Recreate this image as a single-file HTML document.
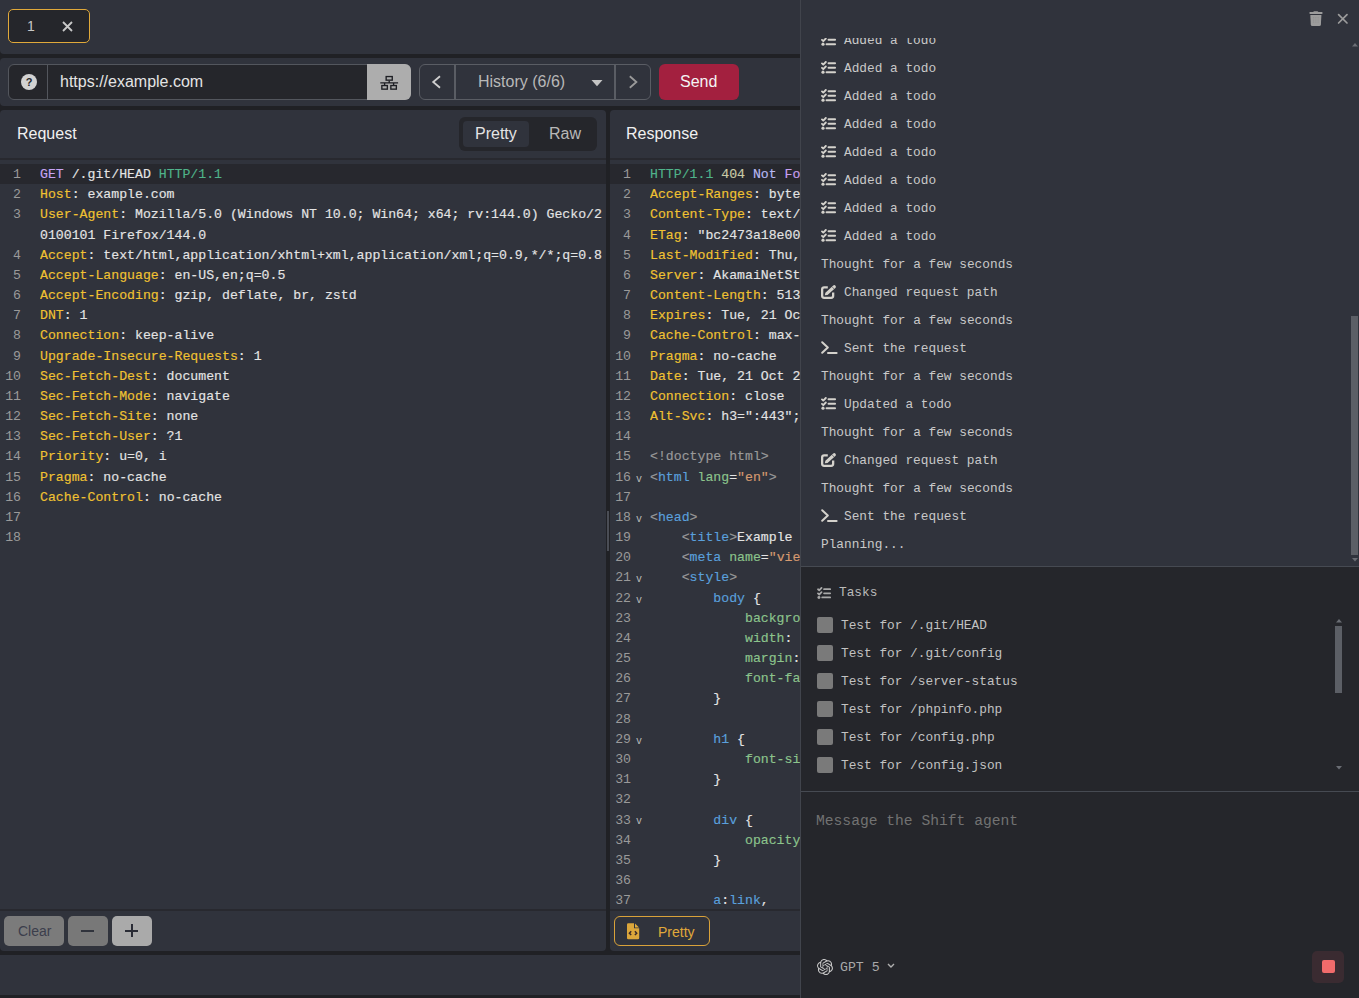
<!DOCTYPE html>
<html><head><meta charset="utf-8">
<style>
*{box-sizing:border-box;margin:0;padding:0}
html,body{width:1359px;height:998px;overflow:hidden;background:#202125;font-family:"Liberation Sans",sans-serif}
.a{position:absolute}
.panel{position:absolute;background:#30333c;border-radius:4px}
.mono{font-family:"Liberation Mono",monospace}
/* code */
.code{position:absolute;font-family:"Liberation Mono",monospace;font-size:13.2px;line-height:20.17px;white-space:pre;color:#e4e4e4;-webkit-text-stroke:0.15px currentColor}
.ln{position:absolute;width:21px;text-align:right;color:#9a9a9a;font-family:"Liberation Mono",monospace;font-size:13.2px;line-height:20.17px}
.hl{position:absolute;background:#27282e}
.m{color:#c8a4f4}.g{color:#4fb38a}.y{color:#f1c232}.w{color:#e4e4e4}
.t{color:#9a9a9a}.b{color:#5aa0dc}.gr{color:#8cc48c}.o{color:#d69a70}.lv{color:#b7b8f2}.pk{color:#c79ff0}.st{color:#cacaa6}
.fold{position:absolute;font-family:"Liberation Mono",monospace;font-size:10px;color:#bbb}
/* drawer */
.dr{position:absolute;font-family:"Liberation Mono",monospace;font-size:12.8px;color:#c9c9c9;white-space:pre}
</style></head><body>

<!-- top tab bar -->
<div class="panel" style="left:0;top:0;width:820px;height:54px;border-radius:0 0 4px 4px"></div>
<div class="a" style="left:8px;top:9px;width:82px;height:34px;border:1px solid #e0a93a;border-radius:5px;background:#25262b"></div>
<div class="a" style="left:27px;top:17px;font-size:14px;line-height:18px;color:#c8c8c8">1</div>
<svg class="a" style="left:62px;top:21px" width="11" height="11" viewBox="0 0 11 11"><path d="M1 1L10 10M10 1L1 10" stroke="#c8c8c8" stroke-width="1.8"/></svg>

<!-- url row -->
<div class="panel" style="left:0;top:58px;width:820px;height:48px"></div>

<!-- request panel -->
<div class="panel" style="left:0;top:110px;width:606px;height:841px"></div>
<!-- response panel -->
<div class="panel" style="left:610px;top:110px;width:220px;height:841px"></div>
<!-- bottom bar -->
<div class="a" style="left:0;top:955px;width:820px;height:40px;background:#30333c"></div>


<!-- URL row content -->
<div class="a" style="left:8px;top:64px;width:403px;height:36px;border:1px solid #53565d;border-radius:6px;background:#25262b;overflow:hidden">
  <div class="a" style="left:38px;top:0;width:1px;height:34px;background:#53565d"></div>
  </div>
<div class="a" style="left:367px;top:64px;width:44px;height:36px;background:#adadad;border-radius:0 6px 6px 0"></div>
<div class="a" style="left:21px;top:74px;width:16px;height:16px;border-radius:50%;background:#d2d2d2;color:#25262b;font-size:11px;font-weight:bold;line-height:16px;text-align:center">?</div>
<div class="a" style="left:60px;top:73px;font-size:16px;line-height:18px;color:#e4e4e4">https://example.com</div>
<svg class="a" style="left:380px;top:75px" width="19" height="15" viewBox="0 0 19 15"><g fill="none" stroke="#1e1f24" stroke-width="1.35"><rect x="6.15" y="1.55" width="6.1" height="3.6"/><rect x="1.85" y="10.55" width="5.5" height="3.6"/><rect x="10.85" y="10.55" width="5.5" height="3.6"/><path d="M9.2 5.8V7.5M0.3 7.9H18.1M4.6 8.1V9.9M13.6 8.1V9.9"/></g></svg>

<div class="a" style="left:419px;top:64px;width:232px;height:36px;border:1px solid #5a5d64;border-radius:6px;background:#30333c;overflow:hidden">
  <div class="a" style="left:34px;top:0;width:2px;height:34px;background:#5a5d64"></div>
  <div class="a" style="left:194px;top:0;width:2px;height:34px;background:#5a5d64"></div>
</div>
<svg class="a" style="left:431px;top:74px" width="12" height="16" viewBox="0 0 12 16"><path d="M9 2.3L2.2 8L9 13.7" fill="none" stroke="#cfcfcf" stroke-width="1.8"/></svg>
<div class="a" style="left:478px;top:73px;font-size:16px;line-height:18px;color:#b8b8b8">History (6/6)</div>
<svg class="a" style="left:591px;top:80px" width="12" height="7" viewBox="0 0 12 7"><path d="M0.5 0H11.5L6 6.3Z" fill="#c4c4c4"/></svg>
<svg class="a" style="left:627px;top:74px" width="12" height="16" viewBox="0 0 12 16"><path d="M2.8 2.2L9.4 8L2.8 13.8" fill="none" stroke="#9a9a9a" stroke-width="1.8"/></svg>
<div class="a" style="left:659px;top:64px;width:80px;height:36px;border-radius:6px;background:#a3203f"></div>
<div class="a" style="left:680px;top:73px;font-size:16px;line-height:18px;color:#f4f4f4">Send</div>

<!-- request header -->
<div class="a" style="left:17px;top:125px;font-size:16px;line-height:18px;color:#f0f0f0">Request</div>
<div class="a" style="left:459px;top:117px;width:138px;height:34px;border-radius:6px;background:#25262b"></div>
<div class="a" style="left:463px;top:121px;width:66px;height:26px;border-radius:4px;background:#30333c"></div>
<div class="a" style="left:475px;top:125px;font-size:16px;line-height:18px;color:#e4e4e4">Pretty</div>
<div class="a" style="left:549px;top:125px;font-size:16px;line-height:18px;color:#b8b8b8">Raw</div>
<div class="a" style="left:0;top:158px;width:606px;height:2px;background:#28292f"></div>
<div class="hl" style="left:0;top:164px;width:606px;height:20px"></div>

<!-- response header -->
<div class="a" style="left:626px;top:125px;font-size:16px;line-height:18px;color:#f0f0f0">Response</div>
<div class="a" style="left:610px;top:158px;width:190px;height:2px;background:#28292f"></div>
<div class="hl" style="left:610px;top:164px;width:190px;height:20px"></div>
<!-- splitter handle -->
<div class="a" style="left:607px;top:511px;width:2px;height:40px;background:#4a4d55"></div>

<div class="code" style="left:40px;top:165px;width:566px;overflow:hidden"><span class="m">GET</span> /.git/HEAD <span class="g">HTTP/1.1</span>
<span class="y">Host</span>: example.com
<span class="y">User-Agent</span>: Mozilla/5.0 (Windows NT 10.0; Win64; x64; rv:144.0) Gecko/2
0100101 Firefox/144.0
<span class="y">Accept</span>: text/html,application/xhtml+xml,application/xml;q=0.9,*/*;q=0.8
<span class="y">Accept-Language</span>: en-US,en;q=0.5
<span class="y">Accept-Encoding</span>: gzip, deflate, br, zstd
<span class="y">DNT</span>: 1
<span class="y">Connection</span>: keep-alive
<span class="y">Upgrade-Insecure-Requests</span>: 1
<span class="y">Sec-Fetch-Dest</span>: document
<span class="y">Sec-Fetch-Mode</span>: navigate
<span class="y">Sec-Fetch-Site</span>: none
<span class="y">Sec-Fetch-User</span>: ?1
<span class="y">Priority</span>: u=0, i
<span class="y">Pragma</span>: no-cache
<span class="y">Cache-Control</span>: no-cache

</div>
<div class="ln" style="left:0;top:165px">1<br>2<br>3<br>&nbsp;<br>4<br>5<br>6<br>7<br>8<br>9<br>10<br>11<br>12<br>13<br>14<br>15<br>16<br>17<br>18</div>
<div class="code" style="left:650px;top:165px;width:150px;height:745px;overflow:hidden"><span class="g">HTTP/1.1</span> <span class="st">404</span> <span class="lv">Not</span> <span class="pk">Found</span>
<span class="y">Accept-Ranges</span>: bytes
<span class="y">Content-Type</span>: text/html
<span class="y">ETag</span>: "bc2473a18e003bdb249eba5ce893033f:1760028122.592274"
<span class="y">Last-Modified</span>: Thu, 09 Oct 2025 16:42:02 GMT
<span class="y">Server</span>: AkamaiNetStorage
<span class="y">Content-Length</span>: 513
<span class="y">Expires</span>: Tue, 21 Oct 2025 10:00:00 GMT
<span class="y">Cache-Control</span>: max-age=0, no-cache, no-store
<span class="y">Pragma</span>: no-cache
<span class="y">Date</span>: Tue, 21 Oct 2025 10:00:00 GMT
<span class="y">Connection</span>: close
<span class="y">Alt-Svc</span>: h3=":443"; ma=93600

<span class="t">&lt;!doctype html&gt;</span>
<span class="t">&lt;</span><span class="b">html</span> <span class="gr">lang</span>=<span class="o">"en"</span><span class="t">&gt;</span>

<span class="t">&lt;</span><span class="b">head</span><span class="t">&gt;</span>
    <span class="t">&lt;</span><span class="b">title</span><span class="t">&gt;</span>Example Domain<span class="t">&lt;/</span><span class="b">title</span><span class="t">&gt;</span>
    <span class="t">&lt;</span><span class="b">meta</span> <span class="gr">name</span>=<span class="o">"viewport"</span>
    <span class="t">&lt;</span><span class="b">style</span><span class="t">&gt;</span>
        <span class="b">body</span> {
            <span class="gr">background</span>: #eee;
            <span class="gr">width</span>: 60vw;
            <span class="gr">margin</span>: 15vh auto;
            <span class="gr">font-family</span>: system-ui;
        }

        <span class="b">h1</span> {
            <span class="gr">font-size</span>: 1.5em;
        }

        <span class="b">div</span> {
            <span class="gr">opacity</span>: 0.8;
        }

        <span class="b">a</span>:<span class="b">link</span>,</div>
<div class="ln" style="left:610px;top:165px">1<br>2<br>3<br>4<br>5<br>6<br>7<br>8<br>9<br>10<br>11<br>12<br>13<br>14<br>15<br>16<br>17<br>18<br>19<br>20<br>21<br>22<br>23<br>24<br>25<br>26<br>27<br>28<br>29<br>30<br>31<br>32<br>33<br>34<br>35<br>36<br>37</div>
<div class="fold" style="left:636px;top:473.6px;line-height:12px">v</div>
<div class="fold" style="left:636px;top:513.9px;line-height:12px">v</div>
<div class="fold" style="left:636px;top:574.4px;line-height:12px">v</div>
<div class="fold" style="left:636px;top:594.6px;line-height:12px">v</div>
<div class="fold" style="left:636px;top:735.8px;line-height:12px">v</div>
<div class="fold" style="left:636px;top:816.4px;line-height:12px">v</div>
<!-- footers -->
<div class="a" style="left:0;top:909px;width:606px;height:2px;background:#28292f"></div>
<div class="a" style="left:610px;top:909px;width:190px;height:2px;background:#28292f"></div>
<div class="a" style="left:4px;top:916px;width:60px;height:30px;border-radius:5px;background:#7b7b7b"></div>
<div class="a" style="left:18px;top:921.8px;font-size:14px;line-height:18px;color:#3b3e4c">Clear</div>
<div class="a" style="left:68px;top:916px;width:40px;height:30px;border-radius:5px;background:#787878"></div>
<div class="a" style="left:81px;top:930px;width:13px;height:2px;background:#30333c"></div>
<div class="a" style="left:112px;top:916px;width:40px;height:30px;border-radius:5px;background:#aaaaaa"></div>
<div class="a" style="left:125px;top:930px;width:13px;height:2px;background:#2a2c36"></div>
<div class="a" style="left:131px;top:924px;width:2px;height:13px;background:#2a2c36"></div>

<div class="a" style="left:614px;top:916px;width:96px;height:30px;border:1px solid #d9a23a;border-radius:6px"></div>
<svg class="a" style="left:626px;top:922.5px" width="14" height="17" viewBox="0 0 14 17"><path d="M1 1.5Q1 0.3 2.2 0.3H8V5.3H13.2V15Q13.2 16.3 12 16.3H2.2Q1 16.3 1 15Z" fill="#dba63b"/><path d="M9 0.6L13 4.4H9Z" fill="#e0ab3c"/><path d="M5.2 8.3L3.4 10.2L5.2 12.1M8.9 8.3L10.7 10.2L8.9 12.1" fill="none" stroke="#3a2a2a" stroke-width="1.5"/></svg>
<div class="a" style="left:658px;top:922.5px;font-size:14px;line-height:18px;color:#e0a93a">Pretty</div>

<!-- drawer -->
<div class="a" style="left:800px;top:0;width:559px;height:998px;background:#30333c;border-left:1px solid #41444c"></div>
<div class="a" style="left:801px;top:566px;width:558px;height:1px;background:#464a52"></div>
<div class="a" style="left:801px;top:567px;width:558px;height:224px;background:#25262b"></div>
<div class="a" style="left:801px;top:791px;width:558px;height:1px;background:#464a52"></div>
<div class="a" style="left:801px;top:792px;width:558px;height:206px;background:#25262b"></div>

<div class="a" style="left:801px;top:38px;width:545px;height:528px;overflow:hidden">
<svg class="a" style="left:19.5px;top:-5px" width="16" height="14" viewBox="0 0 16 14"><g fill="none" stroke="#d4d2cc" stroke-width="1.9" stroke-linecap="round" stroke-linejoin="round"><path d="M1 2.4L2.3 3.6L4.8 1"/><path d="M1 6.9L2.3 8.1L4.8 5.5"/><path d="M7.5 2.3H14.1M7.5 6.8H14.1M5.5 11.2H14.1"/></g><circle cx="2" cy="11.2" r="1.6" fill="#d4d2cc"/></svg>
<div class="dr" style="left:43px;top:-11.4px;line-height:28px">Added a todo</div>
<svg class="a" style="left:19.5px;top:23px" width="16" height="14" viewBox="0 0 16 14"><g fill="none" stroke="#d4d2cc" stroke-width="1.9" stroke-linecap="round" stroke-linejoin="round"><path d="M1 2.4L2.3 3.6L4.8 1"/><path d="M1 6.9L2.3 8.1L4.8 5.5"/><path d="M7.5 2.3H14.1M7.5 6.8H14.1M5.5 11.2H14.1"/></g><circle cx="2" cy="11.2" r="1.6" fill="#d4d2cc"/></svg>
<div class="dr" style="left:43px;top:16.6px;line-height:28px">Added a todo</div>
<svg class="a" style="left:19.5px;top:51px" width="16" height="14" viewBox="0 0 16 14"><g fill="none" stroke="#d4d2cc" stroke-width="1.9" stroke-linecap="round" stroke-linejoin="round"><path d="M1 2.4L2.3 3.6L4.8 1"/><path d="M1 6.9L2.3 8.1L4.8 5.5"/><path d="M7.5 2.3H14.1M7.5 6.8H14.1M5.5 11.2H14.1"/></g><circle cx="2" cy="11.2" r="1.6" fill="#d4d2cc"/></svg>
<div class="dr" style="left:43px;top:44.6px;line-height:28px">Added a todo</div>
<svg class="a" style="left:19.5px;top:79px" width="16" height="14" viewBox="0 0 16 14"><g fill="none" stroke="#d4d2cc" stroke-width="1.9" stroke-linecap="round" stroke-linejoin="round"><path d="M1 2.4L2.3 3.6L4.8 1"/><path d="M1 6.9L2.3 8.1L4.8 5.5"/><path d="M7.5 2.3H14.1M7.5 6.8H14.1M5.5 11.2H14.1"/></g><circle cx="2" cy="11.2" r="1.6" fill="#d4d2cc"/></svg>
<div class="dr" style="left:43px;top:72.6px;line-height:28px">Added a todo</div>
<svg class="a" style="left:19.5px;top:107px" width="16" height="14" viewBox="0 0 16 14"><g fill="none" stroke="#d4d2cc" stroke-width="1.9" stroke-linecap="round" stroke-linejoin="round"><path d="M1 2.4L2.3 3.6L4.8 1"/><path d="M1 6.9L2.3 8.1L4.8 5.5"/><path d="M7.5 2.3H14.1M7.5 6.8H14.1M5.5 11.2H14.1"/></g><circle cx="2" cy="11.2" r="1.6" fill="#d4d2cc"/></svg>
<div class="dr" style="left:43px;top:100.6px;line-height:28px">Added a todo</div>
<svg class="a" style="left:19.5px;top:135px" width="16" height="14" viewBox="0 0 16 14"><g fill="none" stroke="#d4d2cc" stroke-width="1.9" stroke-linecap="round" stroke-linejoin="round"><path d="M1 2.4L2.3 3.6L4.8 1"/><path d="M1 6.9L2.3 8.1L4.8 5.5"/><path d="M7.5 2.3H14.1M7.5 6.8H14.1M5.5 11.2H14.1"/></g><circle cx="2" cy="11.2" r="1.6" fill="#d4d2cc"/></svg>
<div class="dr" style="left:43px;top:128.6px;line-height:28px">Added a todo</div>
<svg class="a" style="left:19.5px;top:163px" width="16" height="14" viewBox="0 0 16 14"><g fill="none" stroke="#d4d2cc" stroke-width="1.9" stroke-linecap="round" stroke-linejoin="round"><path d="M1 2.4L2.3 3.6L4.8 1"/><path d="M1 6.9L2.3 8.1L4.8 5.5"/><path d="M7.5 2.3H14.1M7.5 6.8H14.1M5.5 11.2H14.1"/></g><circle cx="2" cy="11.2" r="1.6" fill="#d4d2cc"/></svg>
<div class="dr" style="left:43px;top:156.6px;line-height:28px">Added a todo</div>
<svg class="a" style="left:19.5px;top:191px" width="16" height="14" viewBox="0 0 16 14"><g fill="none" stroke="#d4d2cc" stroke-width="1.9" stroke-linecap="round" stroke-linejoin="round"><path d="M1 2.4L2.3 3.6L4.8 1"/><path d="M1 6.9L2.3 8.1L4.8 5.5"/><path d="M7.5 2.3H14.1M7.5 6.8H14.1M5.5 11.2H14.1"/></g><circle cx="2" cy="11.2" r="1.6" fill="#d4d2cc"/></svg>
<div class="dr" style="left:43px;top:184.6px;line-height:28px">Added a todo</div>
<div class="dr" style="left:20px;top:212.6px;line-height:28px">Thought for a few seconds</div>
<svg class="a" style="left:19.5px;top:246px" width="16" height="16" viewBox="0 0 16 16"><path d="M6.8 3.35H3.15Q1.15 3.35 1.15 5.35V11.85Q1.15 13.85 3.15 13.85H10.15Q12.15 13.85 12.15 11.85V8.4" fill="none" stroke="#d4d2cc" stroke-width="2.3"/><path d="M3.8 11.3L4.37 8.64L12.23 1.61A1.6 1.6 0 0 1 14.37 3.99L6.51 11.02Z" fill="#d4d2cc"/><path d="M13.17 5.06L11.03 2.68" stroke="#30333c" stroke-width="0.6"/></svg>
<div class="dr" style="left:43px;top:240.6px;line-height:28px">Changed request path</div>
<div class="dr" style="left:20px;top:268.6px;line-height:28px">Thought for a few seconds</div>
<svg class="a" style="left:19.5px;top:303px" width="18" height="14" viewBox="0 0 18 14"><path d="M1.2 1.2L6.8 6.5L1.2 11.8" fill="none" stroke="#d4d2cc" stroke-width="2" stroke-linecap="round" stroke-linejoin="round"/><path d="M7 12.1H15.6" stroke="#d4d2cc" stroke-width="2" stroke-linecap="round"/></svg>
<div class="dr" style="left:43px;top:296.6px;line-height:28px">Sent the request</div>
<div class="dr" style="left:20px;top:324.6px;line-height:28px">Thought for a few seconds</div>
<svg class="a" style="left:19.5px;top:359px" width="16" height="14" viewBox="0 0 16 14"><g fill="none" stroke="#d4d2cc" stroke-width="1.9" stroke-linecap="round" stroke-linejoin="round"><path d="M1 2.4L2.3 3.6L4.8 1"/><path d="M1 6.9L2.3 8.1L4.8 5.5"/><path d="M7.5 2.3H14.1M7.5 6.8H14.1M5.5 11.2H14.1"/></g><circle cx="2" cy="11.2" r="1.6" fill="#d4d2cc"/></svg>
<div class="dr" style="left:43px;top:352.6px;line-height:28px">Updated a todo</div>
<div class="dr" style="left:20px;top:380.6px;line-height:28px">Thought for a few seconds</div>
<svg class="a" style="left:19.5px;top:414px" width="16" height="16" viewBox="0 0 16 16"><path d="M6.8 3.35H3.15Q1.15 3.35 1.15 5.35V11.85Q1.15 13.85 3.15 13.85H10.15Q12.15 13.85 12.15 11.85V8.4" fill="none" stroke="#d4d2cc" stroke-width="2.3"/><path d="M3.8 11.3L4.37 8.64L12.23 1.61A1.6 1.6 0 0 1 14.37 3.99L6.51 11.02Z" fill="#d4d2cc"/><path d="M13.17 5.06L11.03 2.68" stroke="#30333c" stroke-width="0.6"/></svg>
<div class="dr" style="left:43px;top:408.6px;line-height:28px">Changed request path</div>
<div class="dr" style="left:20px;top:436.6px;line-height:28px">Thought for a few seconds</div>
<svg class="a" style="left:19.5px;top:471px" width="18" height="14" viewBox="0 0 18 14"><path d="M1.2 1.2L6.8 6.5L1.2 11.8" fill="none" stroke="#d4d2cc" stroke-width="2" stroke-linecap="round" stroke-linejoin="round"/><path d="M7 12.1H15.6" stroke="#d4d2cc" stroke-width="2" stroke-linecap="round"/></svg>
<div class="dr" style="left:43px;top:464.6px;line-height:28px">Sent the request</div>
<div class="dr" style="left:20px;top:492.6px;line-height:28px">Planning...</div>
</div>
<svg class="a" style="left:1308.5px;top:11px" width="14" height="16" viewBox="0 0 14 16"><path d="M4.2 0.9Q4.5 0.2 5.3 0.2H8.3Q9.1 0.2 9.4 0.9L9.6 1.1H12.8Q13.6 1.1 13.6 1.9T12.8 2.9H1.2Q0.4 2.9 0.4 1.9T1.2 1.1H4Z" fill="#9c9c9c"/><path d="M1.3 4H12.4L11.9 13.6Q11.8 15.1 10.4 15.1H3.3Q1.9 15.1 1.8 13.6Z" fill="#9c9c9c"/><g fill="#8a8a8a"><circle cx="4.6" cy="6.8" r="0.5"/><circle cx="6.85" cy="6.8" r="0.5"/><circle cx="9.1" cy="6.8" r="0.5"/><circle cx="4.6" cy="8.9" r="0.5"/><circle cx="6.85" cy="8.9" r="0.5"/><circle cx="9.1" cy="8.9" r="0.5"/><circle cx="4.6" cy="11" r="0.5"/><circle cx="6.85" cy="11" r="0.5"/><circle cx="9.1" cy="11" r="0.5"/></g></svg>
<svg class="a" style="left:1337px;top:13px" width="12" height="12" viewBox="0 0 12 12"><path d="M1.6 1.6L10 10M10 1.6L1.6 10" stroke="#9c9c9c" stroke-width="1.7" stroke-linecap="round"/></svg>
<div class="a" style="left:1351px;top:316px;width:7px;height:239px;background:#5c5f66"></div>
<svg class="a" style="left:1352px;top:558px" width="6" height="4" viewBox="0 0 6 4"><path d="M0 0H6L3 3.5Z" fill="#6a6d74"/></svg>
<svg class="a" style="left:1352px;top:43px" width="6" height="4" viewBox="0 0 6 4"><path d="M0 3.5H6L3 0Z" fill="#6a6d74"/></svg>
<svg class="a" style="left:817px;top:586.5px" width="15" height="13" viewBox="0 0 16 14"><g fill="none" stroke="#a9a9a9" stroke-width="1.9" stroke-linecap="round" stroke-linejoin="round"><path d="M1 2.4L2.3 3.6L4.8 1"/><path d="M1 6.9L2.3 8.1L4.8 5.5"/><path d="M7.5 2.3H14.1M7.5 6.8H14.1M5.5 11.2H14.1"/></g><circle cx="2" cy="11.2" r="1.6" fill="#a9a9a9"/></svg>
<div class="dr" style="left:839px;top:579.3px;line-height:28px;color:#bababa">Tasks</div>
<div class="a" style="left:817px;top:617px;width:16px;height:16px;border-radius:2px;background:#7a7a7a"></div>
<div class="dr" style="left:841px;top:611.6px;line-height:28px;color:#c2c2c2">Test for /.git/HEAD</div>
<div class="a" style="left:817px;top:645px;width:16px;height:16px;border-radius:2px;background:#7a7a7a"></div>
<div class="dr" style="left:841px;top:639.6px;line-height:28px;color:#c2c2c2">Test for /.git/config</div>
<div class="a" style="left:817px;top:673px;width:16px;height:16px;border-radius:2px;background:#7a7a7a"></div>
<div class="dr" style="left:841px;top:667.6px;line-height:28px;color:#c2c2c2">Test for /server-status</div>
<div class="a" style="left:817px;top:701px;width:16px;height:16px;border-radius:2px;background:#7a7a7a"></div>
<div class="dr" style="left:841px;top:695.6px;line-height:28px;color:#c2c2c2">Test for /phpinfo.php</div>
<div class="a" style="left:817px;top:729px;width:16px;height:16px;border-radius:2px;background:#7a7a7a"></div>
<div class="dr" style="left:841px;top:723.6px;line-height:28px;color:#c2c2c2">Test for /config.php</div>
<div class="a" style="left:817px;top:757px;width:16px;height:16px;border-radius:2px;background:#7a7a7a"></div>
<div class="dr" style="left:841px;top:751.6px;line-height:28px;color:#c2c2c2">Test for /config.json</div>
<div class="a" style="left:1335px;top:626px;width:7px;height:67px;background:#5c5f66"></div>
<svg class="a" style="left:1336px;top:619px" width="6" height="4" viewBox="0 0 6 4"><path d="M0 3.5H6L3 0Z" fill="#6a6d74"/></svg>
<svg class="a" style="left:1336px;top:766px" width="6" height="4" viewBox="0 0 6 4"><path d="M0 0H6L3 3.5Z" fill="#6a6d74"/></svg>
<div class="dr" style="left:816px;top:806.8px;line-height:28px;color:#727272;font-size:14.65px">Message the Shift agent</div>
<svg class="a" style="left:817px;top:959px" width="16" height="16" viewBox="0 0 24 24"><path fill="#c8c8c8" d="M22.28 9.82a5.98 5.98 0 0 0-.52-4.91 6.05 6.05 0 0 0-6.51-2.9A6.07 6.07 0 0 0 4.98 4.18a5.98 5.98 0 0 0-4 2.9 6.05 6.05 0 0 0 .74 7.1 5.98 5.98 0 0 0 .51 4.91 6.05 6.05 0 0 0 6.52 2.9A5.98 5.98 0 0 0 13.26 24a6.06 6.06 0 0 0 5.77-4.21 5.99 5.99 0 0 0 4-2.9 6.06 6.06 0 0 0-.75-7.07zM13.26 22.43a4.48 4.48 0 0 1-2.88-1.04l.14-.08 4.78-2.76a.8.8 0 0 0 .39-.68v-6.74l2.02 1.17a.07.07 0 0 1 .04.05v5.58a4.5 4.5 0 0 1-4.49 4.5zM3.6 18.3a4.47 4.47 0 0 1-.54-3.01l.14.09 4.78 2.76a.77.77 0 0 0 .78 0l5.84-3.37v2.33a.08.08 0 0 1-.03.06L9.74 19.95a4.5 4.5 0 0 1-6.14-1.65zM2.34 7.9a4.48 4.48 0 0 1 2.37-1.97V11.6a.77.77 0 0 0 .39.68l5.81 3.35-2.02 1.17a.08.08 0 0 1-.07 0l-4.83-2.79A4.5 4.5 0 0 1 2.34 7.87zm16.6 3.86l-5.84-3.39L15.12 7.2a.08.08 0 0 1 .07 0l4.83 2.79a4.49 4.49 0 0 1-.68 8.1v-5.68a.79.79 0 0 0-.4-.67zm2.01-3.02l-.14-.09-4.77-2.78a.78.78 0 0 0-.79 0L9.41 9.23V6.9a.07.07 0 0 1 .03-.06l4.83-2.79a4.5 4.5 0 0 1 6.68 4.66zM8.31 12.86L6.29 11.7a.08.08 0 0 1-.04-.06V6.07a4.5 4.5 0 0 1 7.38-3.45l-.14.08-4.78 2.76a.8.8 0 0 0-.39.68zm1.1-2.37l2.6-1.5 2.6 1.5v3l-2.6 1.5-2.6-1.5z"/></svg>
<div class="dr" style="left:840px;top:954px;line-height:28px;color:#a9a9a9;font-size:13.2px">GPT 5</div>
<svg class="a" style="left:887px;top:963px" width="8" height="6" viewBox="0 0 8 6"><path d="M1 1L4 4L7 1" fill="none" stroke="#b0b0b0" stroke-width="1.4"/></svg>
<div class="a" style="left:1312px;top:951px;width:32px;height:32px;border-radius:5px;background:#3a2b31"></div>
<div class="a" style="left:1322px;top:960px;width:13px;height:13px;border-radius:2px;background:#f06b6b"></div>
</body></html>
